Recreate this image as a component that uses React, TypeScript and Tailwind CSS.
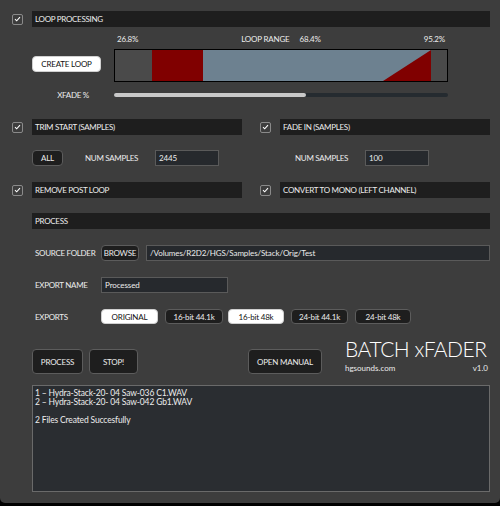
import type { ReactNode } from "react";
import clsx from "clsx";

function Check() {
  return (
    <div className="flex h-[11px] w-[11px] shrink-0 items-center justify-center rounded-[2px] border border-[#8a8a8a]">
      <svg width="7" height="6" viewBox="0 0 7 6">
        <path d="M1 3.2 L2.7 4.8 L6 1.2" stroke="#fff" strokeWidth="1.1" fill="none" />
      </svg>
    </div>
  );
}

function Header({ children, className }: { children?: ReactNode; className?: string }) {
  return (
    <div className={clsx("flex h-4 items-center whitespace-nowrap bg-[#1e1e1e] pl-[3px] text-[8px] tracking-[-0.3px] text-[#ececec]", className)}>
      {children}
    </div>
  );
}

function Btn({ children, light, className }: { children: ReactNode; light?: boolean; className?: string }) {
  return (
    <div
      className={clsx(
        "flex items-center justify-center whitespace-nowrap rounded-[4px] border text-[8px] tracking-[-0.2px]",
        light ? "border-[#d0d0d0] bg-white text-[#111]" : "border-[#5c5c5c] bg-[#1e1e1e] text-[#ececec]",
        className
      )}
    >
      {children}
    </div>
  );
}

function Field({ value, className }: { value: string; className?: string }) {
  return (
    <div
      className={clsx(
        "flex h-4 items-center whitespace-nowrap border border-[#5a5a5a] bg-[#26292d] pl-[3px] text-[8px] tracking-[-0.1px] text-[#ececec]",
        className
      )}
    >
      {value}
    </div>
  );
}

function LoopBar() {
  return (
    <div className="h-[33px] w-[334px] border border-black bg-[#4a4a4a]">
      <svg width="332" height="31" viewBox="0 0 332 31" className="block">
        <rect x="0" y="0" width="37" height="31" fill="#4a4a4a" />
        <rect x="37" y="0" width="51" height="31" fill="#800000" />
        <rect x="88" y="0" width="228" height="31" fill="#6d8190" />
        <polygon points="268,31 316,0 316,31" fill="#800000" />
        <rect x="316" y="0" width="16" height="31" fill="#4a4a4a" />
      </svg>
    </div>
  );
}

export default function App() {
  const logLines = [
    "1 \u2013 Hydra-Stack-20- 04 Saw-036 C1.WAV",
    "2 \u2013 Hydra-Stack-20- 04 Saw-042 Gb1.WAV",
    "\u00a0",
    "2 Files Created Succesfully",
  ];

  return (
    <div className="h-[506px] w-[500px] bg-black font-[Lato,sans-serif] text-[#ececec]">
      <div className="h-[503px] rounded-b-[5px] bg-[#3d3d3d] pt-[11px] pl-[12px] pr-[10px]">
        {/* loop processing */}
        <div className="flex items-center gap-[9px]">
          <Check />
          <Header className="flex-1">LOOP PROCESSING</Header>
        </div>

        <div className="flex pl-[20px]">
          <div className="flex w-[82px] flex-col">
            <div className="h-[29px]" />
            <Btn light className="h-4 w-[69px]">CREATE LOOP</Btn>
            <div className="mt-[18px] whitespace-nowrap text-center text-[8px] leading-[10px] tracking-[-0.3px]">XFADE %</div>
          </div>
          <div className="flex w-[334px] flex-col">
            <div className="mt-[7px] flex h-[10px] items-center justify-between whitespace-nowrap px-[3px] text-[8px] tracking-[-0.2px]">
              <span>26.8%</span>
              <span>
                LOOP RANGE<span className="ml-[10px]">68.4%</span>
              </span>
              <span>95.2%</span>
            </div>
            <div className="mt-[5px]">
              <LoopBar />
            </div>
            <div className="mt-[11px] h-[4px] w-full rounded-full bg-[#252b30]">
              <div className="h-full w-[192px] rounded-full bg-[#c9c9c9]" />
            </div>
          </div>
        </div>

        {/* trim / fade */}
        <div className="mt-[19px] flex items-center">
          <Check />
          <Header className="ml-[9px] w-[210px]">TRIM START (SAMPLES)</Header>
          <div className="ml-[18px]">
            <Check />
          </div>
          <Header className="ml-[9px] flex-1">FADE IN (SAMPLES)</Header>
        </div>

        <div className="mt-[15px] flex items-center whitespace-nowrap pl-[20px] text-[8px] tracking-[-0.3px]">
          <Btn className="h-4 w-[31px]">ALL</Btn>
          <span className="ml-[22px] w-[70px]">NUM SAMPLES</span>
          <Field value="2445" className="w-[64px]" />
          <span className="ml-[76px] w-[70px]">NUM SAMPLES</span>
          <Field value="100" className="w-[64px]" />
        </div>

        <div className="mt-[16px] flex items-center">
          <Check />
          <Header className="ml-[9px] w-[210px]">REMOVE POST LOOP</Header>
          <div className="ml-[18px]">
            <Check />
          </div>
          <Header className="ml-[9px] flex-1">CONVERT TO MONO (LEFT CHANNEL)</Header>
        </div>

        {/* process */}
        <div className="mt-[15px] pl-[20px]">
          <Header>PROCESS</Header>
        </div>

        <div className="mt-[16px] flex items-center whitespace-nowrap pl-[20px] text-[8px] tracking-[-0.3px]">
          <span className="w-[69px] pl-[3px]">SOURCE FOLDER</span>
          <Btn className="h-4 w-[38px]">BROWSE</Btn>
          <Field value="/Volumes/R2D2/HGS/Samples/Stack/Orig/Test" className="ml-[7px] flex-1" />
        </div>

        <div className="mt-[16px] flex items-center whitespace-nowrap pl-[20px] text-[8px] tracking-[-0.3px]">
          <span className="w-[69px] pl-[3px]">EXPORT NAME</span>
          <Field value="Processed" className="w-[127px]" />
        </div>

        <div className="mt-[16px] flex items-center whitespace-nowrap pl-[20px] text-[8px] tracking-[-0.3px]">
          <span className="w-[69px] pl-[3px]">EXPORTS</span>
          <Btn light className="h-[15px] w-[57px]">ORIGINAL</Btn>
          <Btn className="ml-[7px] h-[15px] w-[58px]">16-bit 44.1k</Btn>
          <Btn light className="ml-[5px] h-[15px] w-[56px]">16-bit 48k</Btn>
          <Btn className="ml-[7px] h-[15px] w-[57px]">24-bit 44.1k</Btn>
          <Btn className="ml-[7px] h-[15px] w-[56px]">24-bit 48k</Btn>
        </div>

        {/* actions + title */}
        <div className="mt-[18px] flex h-[40px] items-start pl-[20px]">
          <Btn className="mt-[7px] h-[25px] w-[51px]">PROCESS</Btn>
          <Btn className="ml-[6px] mt-[7px] h-[25px] w-[49px]">STOP!</Btn>
          <Btn className="ml-[110px] mt-[7px] h-[25px] w-[74px]">OPEN MANUAL</Btn>
          <div className="ml-auto mr-[2px] mt-[-4px] flex w-[143px] flex-col">
            <div className="whitespace-nowrap text-[21px] font-light leading-[22px] tracking-[-0.5px] text-white">BATCH xFADER</div>
            <div className="mt-[3px] flex justify-between whitespace-nowrap text-[8px] leading-[10px]">
              <span>hgsounds.com</span>
              <span>v1.0</span>
            </div>
          </div>
        </div>

        <div className="ml-[20px] mt-[3px] h-[107px] border border-[#6a6a6a] bg-[#2a2d31] pl-[2px] pt-[3px] text-[8.5px] leading-[9px] tracking-[-0.15px]">
          {logLines.map((l, i) => (
            <div key={i}>{l}</div>
          ))}
        </div>
      </div>
    </div>
  );
}
